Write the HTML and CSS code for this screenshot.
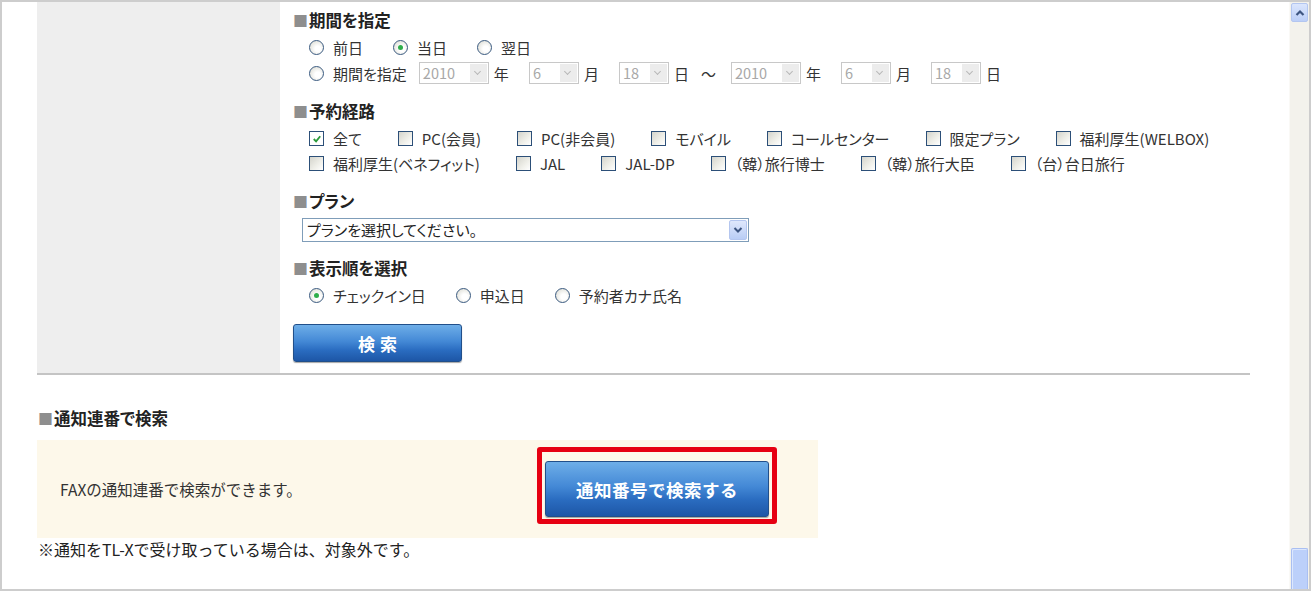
FILE: index.html
```html
<!DOCTYPE html>
<html lang="ja">
<head>
<meta charset="utf-8">
<title>予約検索</title>
<link rel="stylesheet" href="styles.css">
</head>
<body>
<div class="window">
  <div class="viewport">
    <div class="page">
      <div class="search-panel">
        <div class="side"></div>
        <div class="form">
          <h3 class="heading"><span class="sq">■</span>期間を指定</h3>
          <div class="opt-row first">
            <label class="opt"><span class="radio"></span>前日</label>
            <label class="opt"><span class="radio on"></span>当日</label>
            <label class="opt"><span class="radio"></span>翌日</label>
          </div>
          <div class="opt-row">
            <label class="opt"><span class="radio"></span>期間を指定</label>
            <span class="dsel w70 g7"><span class="val">2010</span><span class="arr"></span></span>
            <span class="unit">年</span>
            <span class="dsel w50"><span class="val">6</span><span class="arr"></span></span>
            <span class="unit">月</span>
            <span class="dsel w50"><span class="val">18</span><span class="arr"></span></span>
            <span class="unit">日</span>
            <span class="tilde">～</span>
            <span class="dsel w70 g18"><span class="val">2010</span><span class="arr"></span></span>
            <span class="unit">年</span>
            <span class="dsel w50"><span class="val">6</span><span class="arr"></span></span>
            <span class="unit">月</span>
            <span class="dsel w50"><span class="val">18</span><span class="arr"></span></span>
            <span class="unit">日</span>
          </div>

          <h3 class="heading mt"><span class="sq">■</span>予約経路</h3>
          <div class="cb-row first">
            <label class="cb"><span class="box on"><svg viewBox="0 0 13 13" width="13" height="13"><path d="M3 6.5 L5.5 9 L10 3.5" fill="none" stroke="#2a9a3a" stroke-width="2"/></svg></span>全て</label>
            <label class="cb"><span class="box"></span>PC(会員)</label>
            <label class="cb"><span class="box"></span>PC(非会員)</label>
            <label class="cb"><span class="box"></span>モバイル</label>
            <label class="cb"><span class="box"></span>コールセンター</label>
            <label class="cb"><span class="box"></span>限定プラン</label>
            <label class="cb"><span class="box"></span>福利厚生(WELBOX)</label>
          </div>
          <div class="cb-row">
            <label class="cb"><span class="box"></span>福利厚生(ベネフィット)</label>
            <label class="cb"><span class="box"></span>JAL</label>
            <label class="cb"><span class="box"></span>JAL-DP</label>
            <label class="cb"><span class="box"></span>（韓）旅行博士</label>
            <label class="cb"><span class="box"></span>（韓）旅行大臣</label>
            <label class="cb"><span class="box"></span>（台）台日旅行</label>
          </div>

          <h3 class="heading mt"><span class="sq">■</span>プラン</h3>
          <div class="plan-select">
            <span class="plan-val">プランを選択してください。</span>
            <span class="plan-arr"><svg viewBox="0 0 10 8" width="10" height="8"><path d="M1.5 2 L5 5.5 L8.5 2" fill="none" stroke="#3d5580" stroke-width="2"/></svg></span>
          </div>

          <h3 class="heading mt2"><span class="sq">■</span>表示順を選択</h3>
          <div class="opt-row first">
            <label class="opt"><span class="radio on"></span>チェックイン日</label>
            <label class="opt"><span class="radio"></span>申込日</label>
            <label class="opt"><span class="radio"></span>予約者カナ氏名</label>
          </div>

          <button class="btn btn-search" type="button">検索</button>
        </div>
      </div>

      <div class="section2">
        <h3 class="heading"><span class="sq">■</span>通知連番で検索</h3>
        <div class="fax-box">
          <p class="fax-text">FAXの通知連番で検索ができます。</p>
          <div class="highlight">
            <button class="btn btn-notice" type="button">通知番号で検索する</button>
          </div>
        </div>
        <p class="note">※通知をTL-Xで受け取っている場合は、対象外です。</p>
      </div>
    </div>
  </div>
  <div class="scrollbar">
    <div class="sb-up"><svg viewBox="0 0 10 8" width="10" height="8"><path d="M1.5 6 L5 2.5 L8.5 6" fill="none" stroke="#3d5580" stroke-width="2.2"/></svg></div>
    <div class="sb-track"></div>
    <div class="sb-thumb"></div>
  </div>
</div>
</body>
</html>
```

FILE: styles.css
```css
* { box-sizing: border-box; }
html, body { margin: 0; padding: 0; background: #fff; }
body {
  font-family: "Noto Sans CJK JP", "Noto Sans", sans-serif;
  font-size: 15px;
  color: #333;
  font-feature-settings: "palt";
}
.window {
  width: 1311px;
  height: 591px;
  border: 2px solid #cdcdcd;
  display: flex;
  overflow: hidden;
}
.viewport {
  flex: 1;
  overflow: hidden;
}
.page {
  padding-left: 35px;
  width: 1248px;
}
.search-panel {
  display: flex;
  border-bottom: 2px solid #c4c4c4;
}
.side {
  width: 243px;
  background: #eeeeee;
}
.form {
  flex: 1;
  padding: 7px 0 11px 13px;
}
.heading {
  margin: 0;
  font-size: 16.5px;
  font-weight: bold;
  line-height: 22px;
  height: 22px;
  color: #222;
  letter-spacing: 0;
}
.heading .sq {
  color: #8e8e8e;
  font-size: 15px;
  margin-right: 1px;
}
.heading.mt { margin-top: 14px; }
.heading.mt2 { margin-top: 15px; }

.opt-row {
  display: flex;
  align-items: center;
  height: 26px;
  padding-left: 16px;
}
.opt-row.first { margin-top: 3px; }
.opt {
  display: inline-flex;
  align-items: center;
  margin-right: 30px;
  white-space: nowrap;
}
.radio {
  width: 15px;
  height: 15px;
  border-radius: 50%;
  border: 1px solid #3a5a80;
  background: radial-gradient(circle at 60% 60%, #ffffff 25%, #d6d6cc 100%);
  margin-right: 9px;
  display: inline-flex;
  align-items: center;
  justify-content: center;
  flex: none;
}
.radio.on::after {
  content: "";
  width: 5px;
  height: 5px;
  border-radius: 50%;
  background: #2fae4b;
}
.dsel {
  display: inline-flex;
  height: 22px;
  border: 1px solid #c8c8c8;
  background: #fff;
  align-items: stretch;
  margin-right: 5px;
  flex: none;
}
.dsel.w70 { width: 70px; }
.dsel.w50 { width: 50px; }
.dsel.g7 { margin-left: -18px; }
.dsel.g18 { margin-left: 15px; }
.dsel .val {
  flex: 1;
  color: #a8a8a8;
  font-size: 14.5px;
  line-height: 20px;
  padding-left: 3px;
}
.dsel .arr {
  width: 17px;
  margin: 1px;
  background: #ececec;
  position: relative;
}
.dsel .arr::after {
  content: "";
  position: absolute;
  left: 5px;
  top: 5px;
  width: 4px;
  height: 4px;
  border-right: 1.5px solid #b8b8b8;
  border-bottom: 1.5px solid #b8b8b8;
  transform: rotate(45deg);
}
.unit { margin-right: 20px; }
.tilde { margin-left: -8px; }

.cb-row {
  display: flex;
  align-items: center;
  height: 25px;
  padding-left: 16px;
}
.cb-row.first { margin-top: 4px; }
.cb {
  display: inline-flex;
  align-items: center;
  margin-right: 36px;
  white-space: nowrap;
}
.box {
  width: 15px;
  height: 15px;
  border: 1px solid #2c4f78;
  background: linear-gradient(135deg, #d4d4cc 0%, #f0f0ea 60%, #ffffff 100%);
  margin-right: 9px;
  flex: none;
  display: inline-flex;
  align-items: center;
  justify-content: center;
}
.box.on { background: #fff; }
.box svg { display: block; width: 12px; height: 12px; }

.plan-select {
  margin: 6px 0 0 9px;
  width: 447px;
  height: 24px;
  border: 1px solid #7f9db9;
  display: flex;
  align-items: center;
  justify-content: space-between;
  padding: 0 1px 0 4px;
}
.plan-val {
  font-size: 15px;
  line-height: 20px;
  color: #222;
}
.plan-arr {
  width: 18px;
  height: 20px;
  border: 1px solid #b4c6ef;
  border-radius: 2px;
  background: linear-gradient(#dfe8fc, #b9cdf5);
  display: flex;
  align-items: center;
  justify-content: center;
}

.btn {
  display: block;
  border: 1px solid #214f8a;
  border-radius: 3px;
  color: #fff;
  font-family: "Noto Sans CJK JP", sans-serif;
  font-weight: bold;
  background: linear-gradient(#6eaee8 0%, #4489d6 45%, #2a6cc0 70%, #1d56a6 100%);
  box-shadow: 0 1px 1px rgba(0,0,0,0.35);
  padding: 0;
  cursor: pointer;
}
.btn-search {
  margin-top: 16px;
  width: 169px;
  height: 38px;
  font-size: 17px;
  letter-spacing: 5px;
  padding-left: 5px;
}

.section2 {
  padding-top: 32px;
}
.section2 .heading { padding-left: 1px; }
.fax-box {
  margin-top: 11px;
  width: 781px;
  height: 98px;
  background: #fdf8ea;
  display: flex;
  align-items: center;
  padding-left: 23px;
}
.fax-text {
  margin: 0;
  width: 477px;
  font-size: 15.5px;
  color: #333;
  font-feature-settings: normal;
}
.highlight {
  align-self: flex-start;
  margin-top: 7px;
  border: 5px solid #e60012;
  border-radius: 3px;
  padding: 9px 3px 2px 3px;
}
.btn-notice {
  width: 224px;
  height: 56px;
  font-size: 17.5px;
  letter-spacing: 0.5px;
  font-feature-settings: normal;
}
.note {
  margin: 1px 0 0 1px;
  line-height: 20px;
  font-size: 16px;
  color: #222;
  font-feature-settings: normal;
}

.scrollbar {
  width: 20px;
  background: #f3f2ec;
  border-left: 1px solid #faf9f6;
  display: flex;
  flex-direction: column;
  padding: 1px 1px 0 1px;
}
.sb-up {
  height: 19px;
  border: 1px solid #b3c6f0;
  border-radius: 2px;
  background: linear-gradient(#dbe6fd, #bccff7);
  display: flex;
  align-items: center;
  justify-content: center;
}
.sb-track { flex: 1; }
.sb-thumb {
  height: 41px;
  border: 1px solid #a9bff2;
  border-bottom: none;
  border-radius: 2px 2px 0 0;
  background: #bcd0fa;
  box-shadow: inset 1px 1px 0 #dce7fd;
}
```
